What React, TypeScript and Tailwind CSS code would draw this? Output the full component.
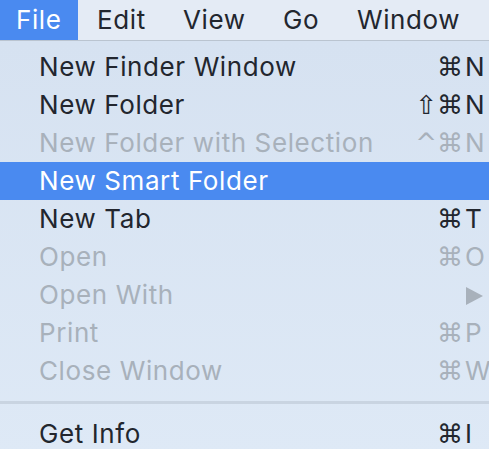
import type { ReactNode } from "react";

type Item = {
  label: string;
  mods?: string;
  keyName?: ReactNode;
  disabled?: boolean;
  active?: boolean;
};

const items: Item[] = [
  { label: "New Finder Window", mods: "⌘", keyName: "N" },
  { label: "New Folder", mods: "⇧⌘", keyName: "N" },
  { label: "New Folder with Selection", mods: "^⌘", keyName: "N", disabled: true },
  { label: "New Smart Folder", active: true },
  { label: "New Tab", mods: "⌘", keyName: "T" },
  { label: "Open", mods: "⌘", keyName: "O", disabled: true },
  {
    label: "Open With",
    keyName: (
      <svg width="18" height="18" viewBox="0 0 18 18" className="mt-[2px]">
        <path d="M1 0 L18 9 L1 18 Z" fill="currentColor" />
      </svg>
    ),
    disabled: true,
  },
  { label: "Print", mods: "⌘", keyName: "P", disabled: true },
  { label: "Close Window", mods: "⌘", keyName: "W", disabled: true },
];

// menu bar titles, widths measured off the bar
const menus = [
  { name: "File", w: "w-[78px] pl-[16px]" },
  { name: "Edit", w: "w-[86px] pl-[19px]" },
  { name: "View", w: "w-[100px] pl-[19px]" },
  { name: "Go", w: "w-[74px] pl-[19px]" },
  { name: "Window", w: "w-[151px] pl-[19px]" },
];

function Row({ item }: { item: Item }) {
  const color = item.active
    ? "bg-[#4a8af0] text-white"
    : item.disabled
      ? "text-[#a8b1bb]"
      : "text-[#22262e]";
  return (
    <div className={`flex h-[38px] items-center pl-[39px] ${color}`}>
      <span className="flex-1 whitespace-nowrap tracking-[0.6px]">{item.label}</span>
      <span className="whitespace-nowrap text-right font-['DejaVu_Sans',sans-serif]">{item.mods}</span>
      <span className="flex w-[26px] shrink-0 items-center pl-[2px] whitespace-nowrap">{item.keyName}</span>
    </div>
  );
}

export default function App() {
  return (
    <div className="h-[449px] w-[489px] overflow-hidden bg-[#dbe6f4] font-['Inter','DejaVu_Sans',sans-serif] text-[26px] leading-none">
      <div className="flex h-[41px] items-center border-b border-[#bac4d0] bg-[#e4ebf5] text-[#22262e] tracking-[0.6px]">
        {menus.map((m, i) => (
          <div
            key={m.name}
            className={`flex h-full shrink-0 items-center ${m.w} ${i === 0 ? "bg-[#4a8af0] text-white" : ""}`}
          >
            {m.name}
          </div>
        ))}
      </div>
      <div className="bg-gradient-to-b from-[#d6e2f1] to-[#dee9f6] pt-[7px]">
        {items.map((it) => (
          <Row key={it.label} item={it} />
        ))}
        <div className="py-[11px]">
          <div className="h-[3px] bg-[#c9d4e1]" />
        </div>
        <Row item={{ label: "Get Info", mods: "⌘", keyName: "I" }} />
      </div>
    </div>
  );
}
